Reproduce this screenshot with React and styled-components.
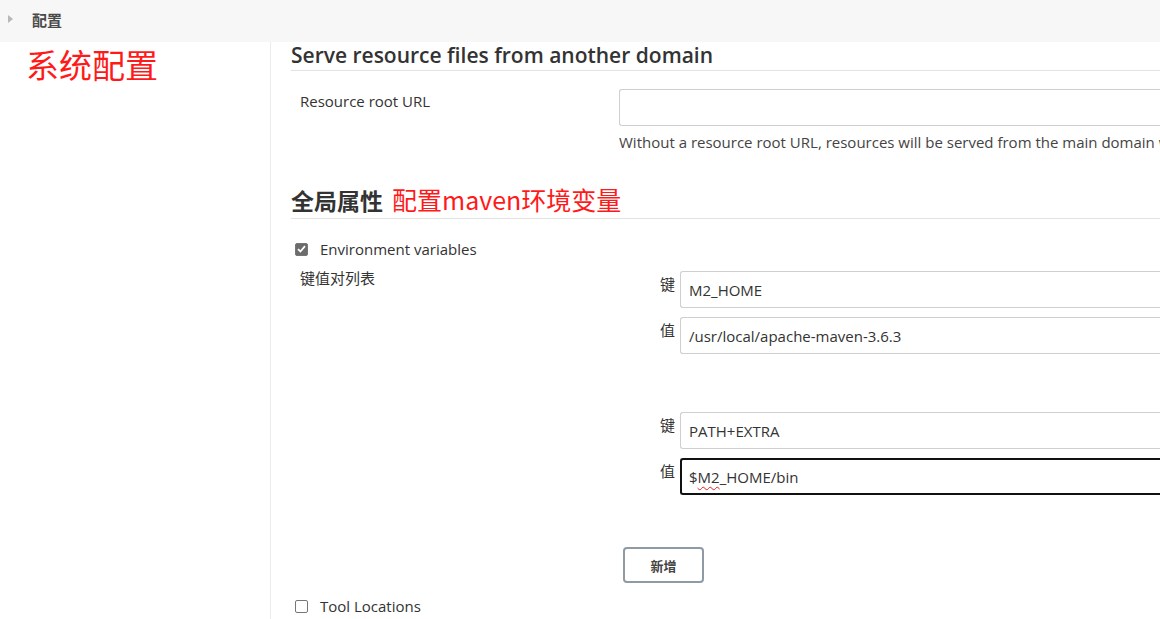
import React from "react";
import styled, { createGlobalStyle } from "styled-components";

const Global = createGlobalStyle`
  html, body {
    margin: 0;
    padding: 0;
    background: #fff;
    font-family: "Open Sans", "Noto Sans CJK SC", sans-serif;
    color: #333;
    overflow: hidden;
  }
`;

const Page = styled.div`
  width: 1160px;
  height: 619px;
  display: flex;
  flex-direction: column;
`;

const TopBar = styled.div`
  height: 42px;
  flex: none;
  display: flex;
  align-items: center;
  background: #f7f7f7;
  padding-left: 8px;
  gap: 19px;
`;

const Caret = styled.span`
  width: 0;
  height: 0;
  border-top: 4px solid transparent;
  border-bottom: 4px solid transparent;
  border-left: 5px solid #b8b8b8;
  margin-top: -4px;
`;

const Crumb = styled.span`
  font-size: 15px;
  font-weight: 700;
  color: #4a4a4a;
  margin-top: -3px;
`;

const Body = styled.div`
  flex: 1;
  display: grid;
  grid-template-columns: 271px 1fr;
  min-height: 0;
`;

const Side = styled.div`
  border-right: 1px solid #ececec;
  padding: 3px 0 0 26px;
`;

const Note = styled.span`
  color: #ff1a1a;
  font-family: "Noto Sans CJK SC", sans-serif;
  font-size: ${p => p.size || 24}px;
  font-weight: 400;
  line-height: 1.2;
`;

const Main = styled.div`
  padding-left: 20px;
  overflow: hidden;
`;

const Heading = styled.h2`
  margin: 0;
  font-size: ${p => (p.cjk ? 23 : 21)}px;
  font-weight: ${p => (p.cjk ? 700 : 600)};
  color: #333;
  padding-bottom: ${p => p.pb ?? 4}px;
  padding-top: ${p => p.pt ?? 0}px;
  border-bottom: 1px solid #e2e2e2;
  display: flex;
  align-items: baseline;
  gap: 9px;
  white-space: nowrap;
  line-height: 1.3;
`;

const Row = styled.div`
  display: grid;
  grid-template-columns: 328px 1fr;
  margin-top: ${p => p.mt || 0}px;
`;

const Label = styled.div`
  padding-left: 9px;
  font-size: 15px;
  line-height: 22px;
  padding-top: ${p => p.pt || 0}px;
`;

const TextBox = styled.div`
  height: 37px;
  box-sizing: border-box;
  border: 1px solid #cfcfcf;
  border-radius: 3px;
  border-right: none;
  border-top-right-radius: 0;
  border-bottom-right-radius: 0;
  display: flex;
  align-items: center;
  padding-left: 8px;
  font-size: 15px;
  color: #333;
  white-space: nowrap;
  ${p =>
    p.focused &&
    `
    border: 2px solid #111;
    border-right: none;
    padding-left: 7px;
  `}
`;

const Help = styled.div`
  font-size: 15px;
  margin-top: 6px;
  white-space: nowrap;
  color: #444;
`;

const Check = styled.label`
  display: flex;
  align-items: center;
  gap: 12px;
  padding-left: 4px;
  font-size: 15px;
  height: 20px;
  margin-top: ${p => p.mt || 0}px;
`;

const Box = styled.span`
  width: 13px;
  height: 13px;
  box-sizing: border-box;
  border-radius: 2px;
  border: 1px solid #767676;
  background: ${p => (p.on ? "#6c6c6c" : "#fff")};
  display: flex;
  align-items: center;
  justify-content: center;
`;

const Pairs = styled.div`
  padding-left: 41px;
  padding-top: 4px;
  display: flex;
  flex-direction: column;
`;

const Pair = styled.div`
  display: flex;
  flex-direction: column;
  gap: 9px;
  margin-top: ${p => p.mt || 0}px;
`;

const PairRow = styled.div`
  display: grid;
  grid-template-columns: 20px 1fr;
  align-items: start;
`;

const PairKey = styled.span`
  font-size: 15px;
  line-height: 20px;
  padding-top: 3px;
`;

const Squiggle = styled.span`
  text-decoration: underline wavy #e02020;
  text-decoration-thickness: 1px;
  text-underline-offset: 3px;
`;

const AddButton = styled.button`
  margin-top: 52px;
  width: 81px;
  height: 36px;
  border: 2px solid #8e9aa4;
  border-radius: 4px;
  background: #fff;
  font-family: "Noto Sans CJK SC", sans-serif;
  font-size: 13px;
  font-weight: 700;
  color: #444;
  margin-left: 4px;
`;

function Tick() {
  return (
    <svg width="9" height="8" viewBox="0 0 9 8">
      <path d="M1 4.2 L3.4 6.5 L8 1.2" fill="none" stroke="#fff" strokeWidth="1.8" />
    </svg>
  );
}

export default function App() {
  return (
    <Page>
      <Global />
      <TopBar>
        <Caret />
        <Crumb>配置</Crumb>
      </TopBar>
      <Body>
        <Side>
          <Note size={33}>系统配置</Note>
        </Side>
        <Main>
          <Heading pt={0} pb={1}>Serve resource files from another domain</Heading>
          <Row mt={18}>
            <Label pt={1}>Resource root URL</Label>
            <div>
              <TextBox />
              <Help>
                Without a resource root URL, resources will be served from the main domain with Content-Security-Policy set.
              </Help>
            </div>
          </Row>
          <Heading cjk pt={32} pb={1}>
            全局属性 <Note size={25}>配置maven环境变量</Note>
          </Heading>
          <Check mt={20}>
            <Box on>
              <Tick />
            </Box>
            Environment variables
          </Check>
          <Row mt={8}>
            <Label>键值对列表</Label>
            <Pairs>
              <Pair>
                <PairRow>
                  <PairKey>键</PairKey>
                  <TextBox>M2_HOME</TextBox>
                </PairRow>
                <PairRow>
                  <PairKey>值</PairKey>
                  <TextBox>/usr/local/apache-maven-3.6.3</TextBox>
                </PairRow>
              </Pair>
              <Pair mt={58}>
                <PairRow>
                  <PairKey>键</PairKey>
                  <TextBox>PATH+EXTRA</TextBox>
                </PairRow>
                <PairRow>
                  <PairKey>值</PairKey>
                  <TextBox focused>
                    $<Squiggle>M2</Squiggle>_HOME/bin
                  </TextBox>
                </PairRow>
              </Pair>
            </Pairs>
          </Row>
          <Row>
            <div />
            <div>
              <AddButton>新增</AddButton>
            </div>
          </Row>
          <Check mt={13}>
            <Box />
            Tool Locations
          </Check>
        </Main>
      </Body>
    </Page>
  );
}
